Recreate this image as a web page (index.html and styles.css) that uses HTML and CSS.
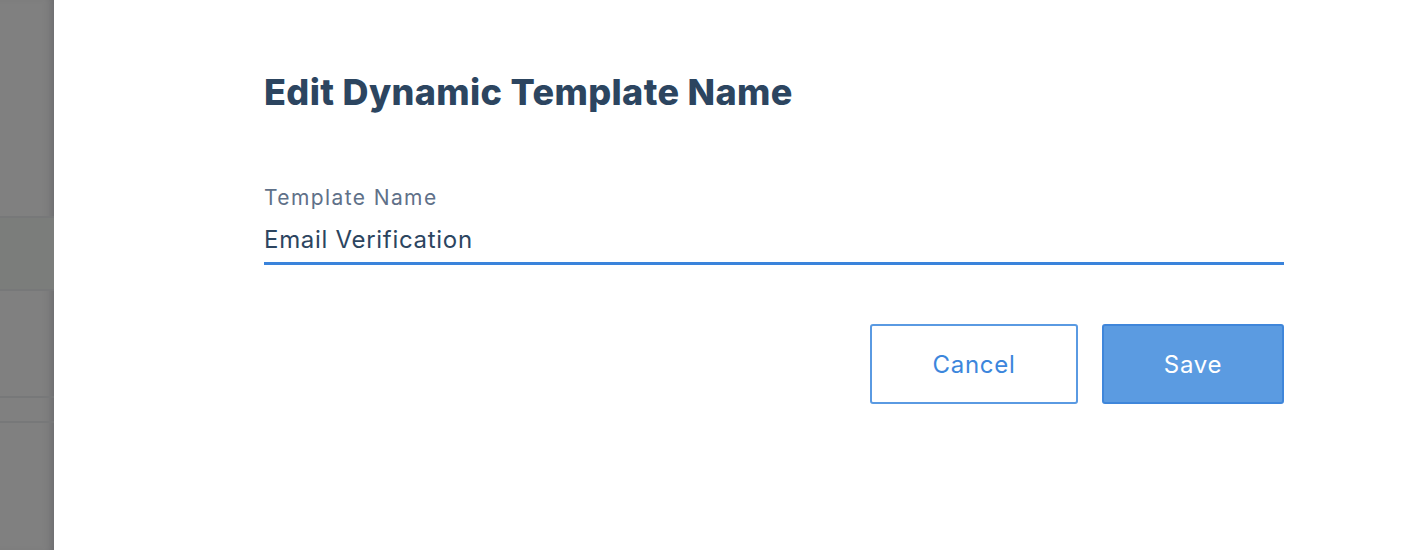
FILE: index.html
```html
<!DOCTYPE html>
<html>
<head>
<meta charset="utf-8">
<link rel="stylesheet" href="styles.css">
</head>
<body>
<div class="page">
  <div class="backdrop">
    <div class="bg-row bg-top"></div>
    <div class="bg-row bg-mid"></div>
    <div class="bg-row bg-low"></div>
    <div class="bg-row bg-small"></div>
    <div class="bg-row bg-rest"></div>
  </div>
  <div class="modal">
    <h1 class="title">Edit Dynamic Template Name</h1>
    <div class="field">
      <label class="label">Template Name</label>
      <div class="input">Email Verification</div>
    </div>
    <div class="actions">
      <button class="btn btn-secondary">Cancel</button>
      <button class="btn btn-primary">Save</button>
    </div>
  </div>
</div>
</body>
</html>
```
FILE: styles.css
```css
* { box-sizing: border-box; }
html, body { margin: 0; padding: 0; height: 100%; }
body { font-family: Inter, "Noto Sans", sans-serif; background: #fff; overflow: hidden; }
.page { display: flex; height: 550px; }
.backdrop {
  width: 54px;
  flex: none;
  display: flex;
  flex-direction: column;
  background: #808080;
  box-shadow: inset -8px 0 8px -6px rgba(60,60,70,0.35);
}
.bg-row { border-bottom: 2px solid #777879; }
.bg-top { height: 218px; }
.bg-mid { height: 73px; background: #7b7d7b; }
.bg-low { height: 107px; }
.bg-small { height: 25px; }
.bg-rest { flex: 1; border-bottom: none; }
.modal {
  flex: 1;
  padding: 68px 130px 0 210px;
  display: flex;
  flex-direction: column;
}
.title {
  margin: 0;
  font-size: 36px;
  font-weight: 800;
  color: #2c4560;
  letter-spacing: 0.36px;
  line-height: 48px;
}
.field { margin-top: 69px; display: flex; flex-direction: column; }
.label {
  font-size: 21px;
  color: #5f7189;
  line-height: 26px;
  letter-spacing: 1.4px;
}
.input {
  margin-top: 14px;
  font-size: 24px;
  color: #2c4560;
  line-height: 30px;
  padding-bottom: 7px;
  letter-spacing: 0.7px;
  border-bottom: 3px solid #3a83db;
}
.actions {
  margin-top: 59px;
  display: flex;
  justify-content: flex-end;
  gap: 24px;
}
.btn {
  height: 80px;
  font-family: Inter, "Noto Sans", sans-serif;
  font-size: 24px;
  letter-spacing: 0.7px;
  padding-top: 2px;
  border-radius: 3px;
  cursor: pointer;
}
.btn-secondary {
  width: 208px;
  background: #fff;
  border: 2px solid #5a9ae2;
  color: #3c86dc;
}
.btn-primary {
  width: 182px;
  background: #5b9be1;
  border: 2px solid #3f86da;
  color: #fff;
}
```
